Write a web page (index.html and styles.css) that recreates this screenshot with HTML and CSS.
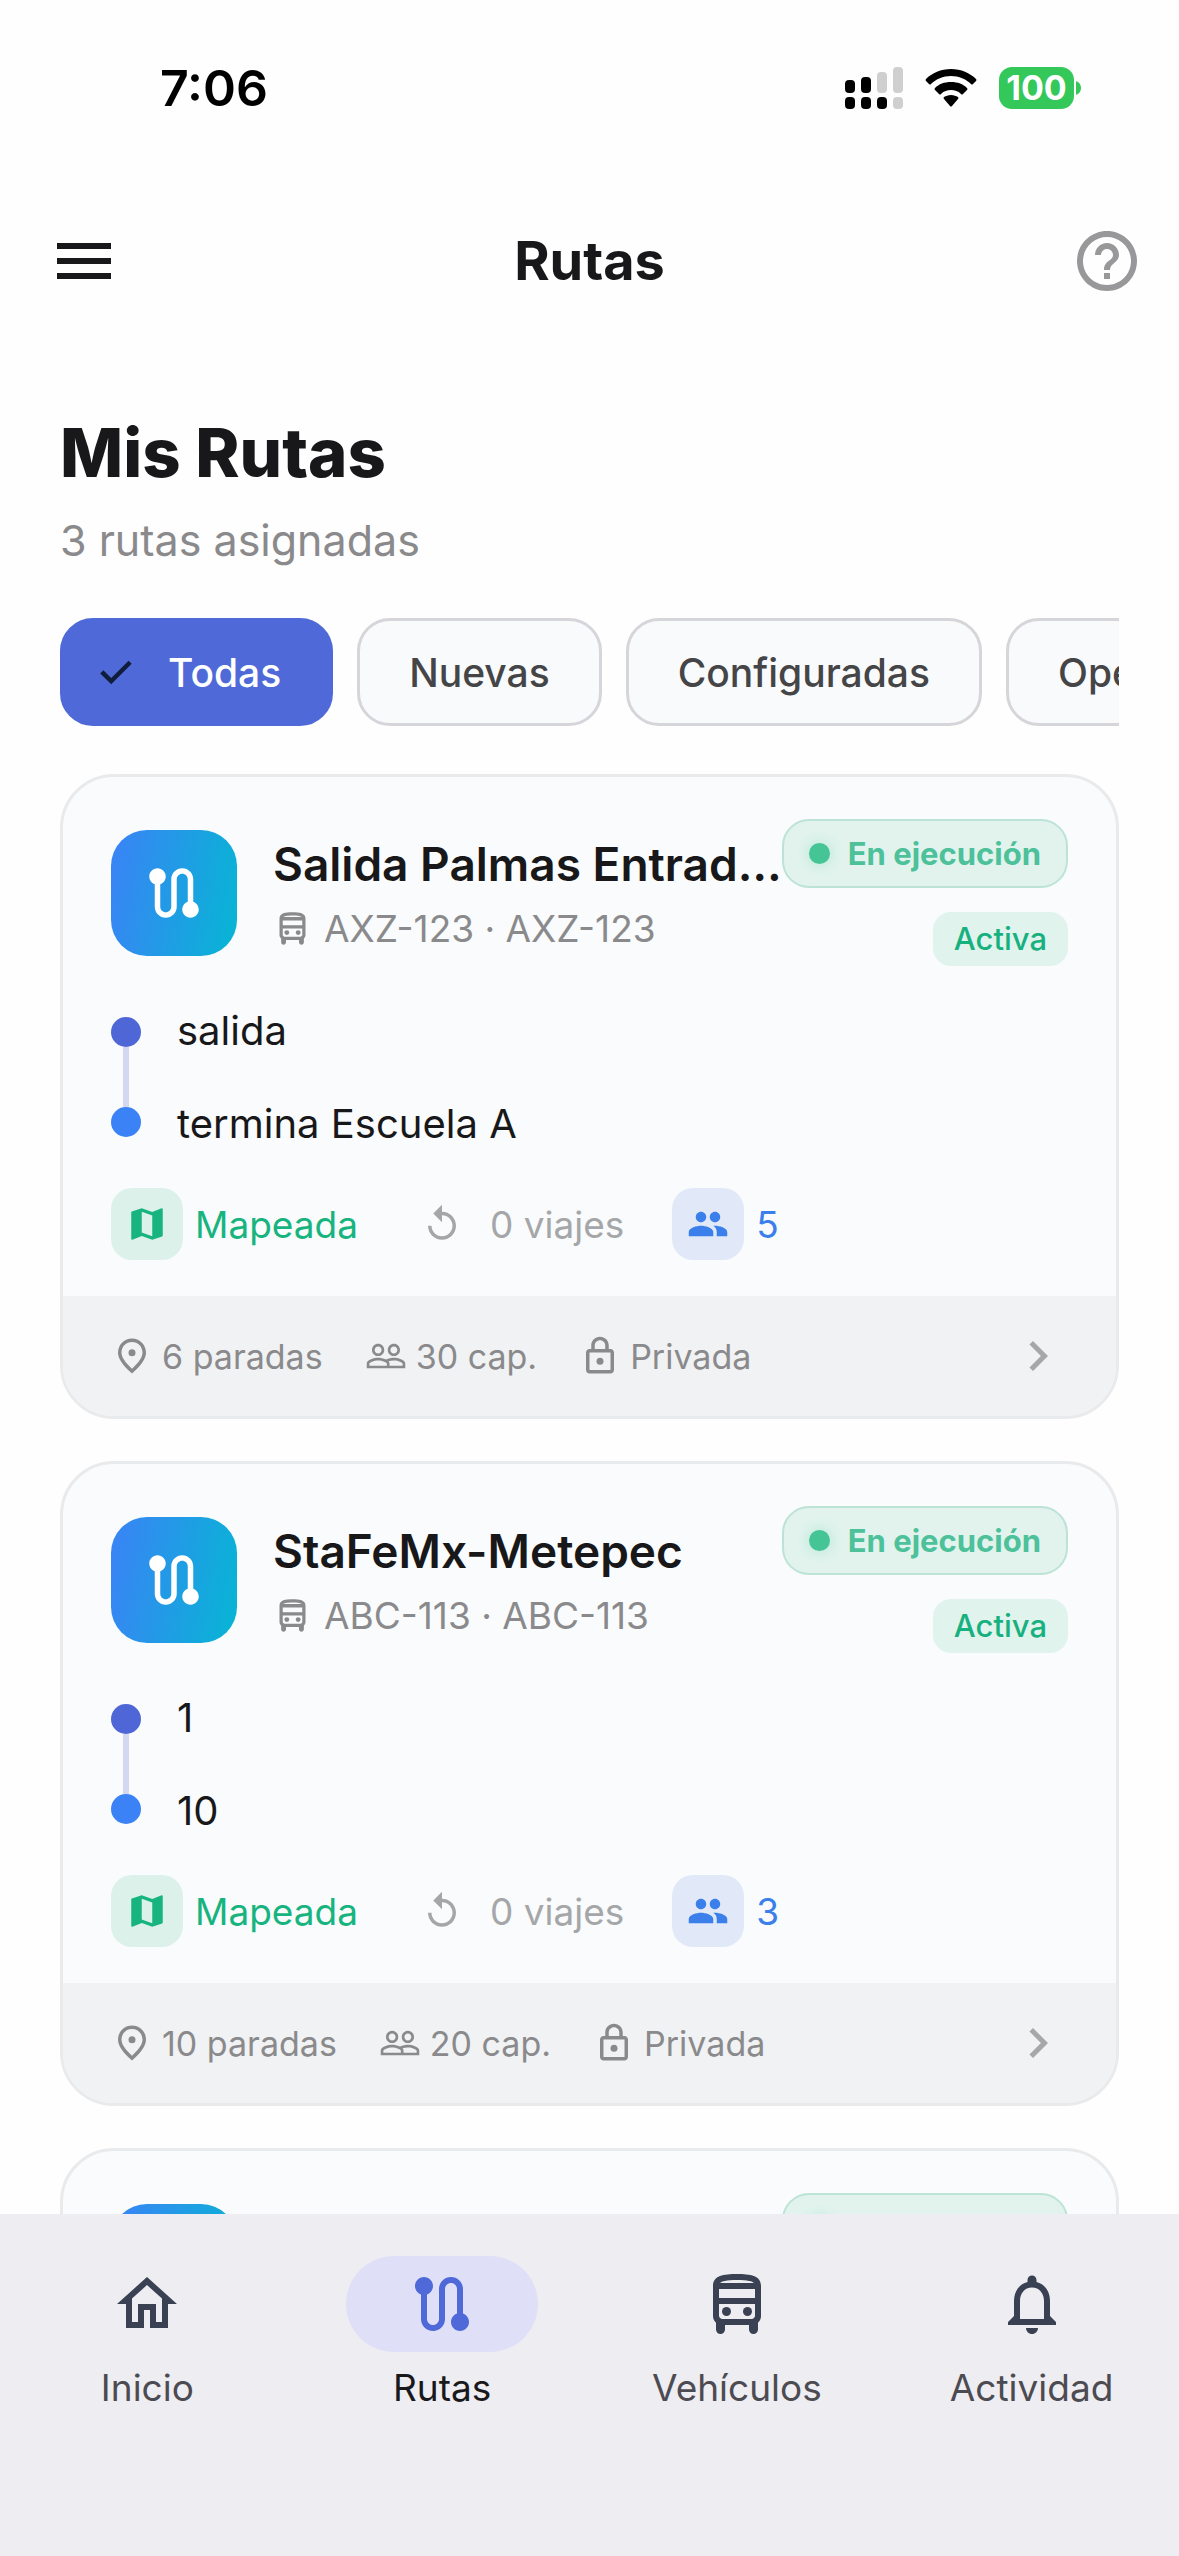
FILE: index.html
```html
<!DOCTYPE html>
<html lang="es">
<head>
<meta charset="utf-8">
<meta name="viewport" content="width=device-width, initial-scale=1">
<title>Rutas</title>
<link rel="stylesheet" href="styles.css">
</head>
<body>
<svg class="sprite" aria-hidden="true">
  <symbol id="i-menu" viewBox="0 0 24 24"><path d="M3 18h18v-2H3v2zm0-5h18v-2H3v2zm0-7v2h18V6H3z"/></symbol>
  <symbol id="i-help" viewBox="0 0 24 24"><path d="M11 18h2v-2h-2v2zm1-16C6.480 2 2 6.480 2 12s4.480 10 10 10 10-4.480 10-10S17.520 2 12 2zm0 18c-4.410 0-8-3.590-8-8s3.590-8 8-8 8 3.590 8 8-3.590 8-8 8zm0-14c-2.210 0-4 1.790-4 4h2c0-1.100.9-2 2-2s2 .9 2 2c0 2-3 1.750-3 5h2c0-2.250 3-2.500 3-5 0-2.210-1.790-4-4-4z"/></symbol>
  <symbol id="i-route" viewBox="0 0 24 24"><path d="M19 15.180V7c0-2.210-1.790-4-4-4s-4 1.790-4 4v10c0 1.100-.9 2-2 2s-2-.9-2-2V8.820C8.160 8.400 9 7.300 9 6c0-1.660-1.340-3-3-3S3 4.340 3 6c0 1.300.84 2.400 2 2.820V17c0 2.210 1.790 4 4 4s4-1.790 4-4V7c0-1.100.9-2 2-2s2 .9 2 2v8.180c-1.160.41-2 1.510-2 2.820 0 1.660 1.340 3 3 3s3-1.340 3-3c0-1.300-.84-2.400-2-2.820z"/></symbol>
  <symbol id="i-bus" viewBox="0 0 24 24"><path d="M12 2c-4.420 0-8 .5-8 4v10c0 .88.39 1.670 1 2.220V20.500c0 .83.67 1.500 1.500 1.500S8 21.330 8 20.500V19h8v1.500c0 .82.67 1.500 1.500 1.500s1.500-.67 1.500-1.500v-2.280c.61-.55 1-1.340 1-2.220V6c0-3.500-3.580-4-8-4zm5.660 2.990H6.340C6.890 4.460 8.310 4 12 4s5.110.46 5.660.99zM18 7v3H6V7h12zm-.34 9.660L17.080 17H6.920l-.58-.34C6.130 16.470 6 16.240 6 16v-4h12v4c0 .24-.13.47-.34.66z"/><circle cx="8.500" cy="14.500" r="1.500"/><circle cx="15.500" cy="14.500" r="1.500"/></symbol>
  <symbol id="i-map" viewBox="0 0 24 24"><path fill-rule="evenodd" d="M20.500 3l-.16.03L15 5.100 9 3 3.360 4.900c-.21.07-.36.25-.36.48V20.500c0 .28.22.5.5.5l.16-.03L9 18.900l6 2.100 5.640-1.900c.21-.07.36-.25.36-.48V3.500c0-.28-.22-.5-.5-.5zM15 19l-6-2.110V5l6 2.110V19z"/></symbol>
  <symbol id="i-replay" viewBox="0 0 24 24"><path d="M12 5V1L7 6l5 5V7c3.310 0 6 2.690 6 6s-2.690 6-6 6-6-2.690-6-6H4c0 4.420 3.580 8 8 8s8-3.580 8-8-3.580-8-8-8z"/></symbol>
  <symbol id="i-people" viewBox="0 0 24 24"><path d="M16 11c1.660 0 2.990-1.340 2.990-3S17.660 5 16 5s-3 1.340-3 3 1.340 3 3 3zm-8 0c1.660 0 2.990-1.340 2.990-3S9.660 5 8 5 5 6.340 5 8s1.340 3 3 3zm0 2c-2.330 0-7 1.170-7 3.500V19h14v-2.500c0-2.330-4.670-3.500-7-3.500zm8 0c-.29 0-.62.02-.97.05 1.160.84 1.970 1.970 1.970 3.450V19h6v-2.500c0-2.330-4.670-3.500-7-3.500z"/></symbol>
  <symbol id="i-group" viewBox="0 0 24 24"><path fill-rule="evenodd" d="M16.500 13c-1.200 0-3.070.34-4.500 1-1.430-.67-3.300-1-4.500-1C5.330 13 1 14.080 1 16.250V19h22v-2.750c0-2.170-4.330-3.250-6.500-3.250zm-4 4.500h-10v-1.250c0-.54 2.560-1.750 5-1.750s5 1.210 5 1.750v1.250zm9 0H14v-1.250c0-.46-.2-.86-.52-1.220.88-.3 1.960-.53 3.020-.53 2.440 0 5 1.210 5 1.750v1.250zM7.500 12c1.930 0 3.500-1.570 3.500-3.500S9.430 5 7.500 5 4 6.570 4 8.500 5.570 12 7.500 12zm0-5.500c1.100 0 2 .9 2 2s-.9 2-2 2-2-.9-2-2 .9-2 2-2zm9 5.500c1.930 0 3.500-1.570 3.500-3.500S18.430 5 16.500 5 13 6.570 13 8.500s1.570 3.500 3.500 3.500zm0-5.500c1.100 0 2 .9 2 2s-.9 2-2 2-2-.9-2-2 .9-2 2-2z"/></symbol>
  <symbol id="i-pin" viewBox="0 0 24 24"><path fill-rule="evenodd" d="M12 2c4.200 0 8 3.220 8 8.200 0 3.320-2.670 7.250-8 11.800-5.330-4.550-8-8.480-8-11.800C4 5.220 7.800 2 12 2zm6 8.200C18 6.570 15.350 4 12 4s-6 2.570-6 6.200c0 2.340 1.950 5.440 6 9.140 4.050-3.700 6-6.800 6-9.140z"/><circle cx="12" cy="10.200" r="2"/></symbol>
  <symbol id="i-lock" viewBox="0 0 24 24"><path fill-rule="evenodd" d="M18 8h-1V6c0-2.760-2.240-5-5-5S7 3.240 7 6v2H6c-1.100 0-2 .9-2 2v10c0 1.100.9 2 2 2h12c1.100 0 2-.9 2-2V10c0-1.100-.9-2-2-2zM9 6c0-1.660 1.340-3 3-3s3 1.340 3 3v2H9V6zm9 14H6V10h12v10z"/><circle cx="12" cy="15" r="2"/></symbol>
  <symbol id="i-chevron" viewBox="0 0 24 24"><path d="M10 6L8.590 7.410 13.170 12l-4.580 4.590L10 18l6-6z"/></symbol>
  <symbol id="i-check" viewBox="0 0 24 24"><path d="M8.700 19l-6.300-6.200 1.800-1.800 4.500 4.400 9.900-9.900 1.800 1.800z"/></symbol>
  <symbol id="i-home" viewBox="0 0 24 24"><path d="M12 5.690l5 4.500V18h-2v-6H9v6H7v-7.810l5-4.500M12 3L2 12h3v8h6v-6h2v6h6v-8h3L12 3z"/></symbol>
  <symbol id="i-bell" viewBox="0 0 24 24"><path fill-rule="evenodd" d="M12 22c1.100 0 2-.9 2-2h-4c0 1.100.9 2 2 2zm6-6v-5c0-3.070-1.630-5.640-4.500-6.320V4c0-.83-.67-1.500-1.500-1.500s-1.500.67-1.500 1.500v.68C7.640 5.360 6 7.920 6 11v5l-2 2v1h16v-1l-2-2zm-2 1H8v-6c0-2.480 1.510-4.500 4-4.500s4 2.020 4 4.500v6z"/></symbol>
</svg>

<div class="app">
  <div class="status-bar">
    <time>7:06</time>
    <div class="status-icons">
      <svg class="signal" viewBox="0 0 58 42" role="img" aria-label="Señal">
        <rect x="0" y="13" width="10" height="13" rx="4"/><rect x="16" y="10" width="10" height="16" rx="4"/>
        <rect class="off" x="32" y="5" width="10" height="21" rx="4"/><rect class="off" x="48" y="0" width="10" height="26" rx="4"/>
        <rect x="0" y="30" width="10" height="12" rx="4"/><rect x="16" y="30" width="10" height="12" rx="4"/>
        <rect x="32" y="30" width="10" height="12" rx="4"/><rect class="off" x="48" y="30" width="10" height="12" rx="4"/>
      </svg>
      <svg class="wifi" viewBox="0 0 52 38" role="img" aria-label="Wi-Fi">
        <path d="M26 0C36 0 45 4 51 10q1 1 0 2l-3 3q-1 1-2 0C41 10 34 7 26 7S11 10 6 15q-1 1-2 0l-3-3q-1-1 0-2C7 4 16 0 26 0z"/>
        <path d="M26 13c7 0 12 2 16 6q1 1 0 2l-4 4q-1 1-2 0c-3-3-6-4-10-4s-7 1-10 4q-1 1-2 0l-4-4q-1-1 0-2c4-4 9-6 16-6z"/>
        <path d="M26 26c3 0 5 1 7 2q1 1 0 2l-6 7q-1 1-2 0l-6-7q-1-1 0-2c2-1 4-2 7-2z"/>
      </svg>
      <div class="battery"><span class="battery-body">100</span><svg viewBox="0 0 5 14" aria-hidden="true"><path d="M0 0q5 2 5 7t-5 7z"/></svg></div>
    </div>
  </div>

  <header class="app-bar">
    <button class="icon-button" type="button" aria-label="Menú"><svg class="icon-lg"><use href="#i-menu"/></svg></button>
    <div class="app-title">Rutas</div>
    <button class="icon-button help" type="button" aria-label="Ayuda"><svg class="icon-lg"><use href="#i-help"/></svg></button>
  </header>

  <main class="content">
    <h1>Mis Rutas</h1>
    <p class="summary">3 rutas asignadas</p>

    <div class="chips">
      <button class="chip selected" type="button" aria-pressed="true"><svg class="chip-check"><use href="#i-check"/></svg>Todas</button>
      <button class="chip" type="button" aria-pressed="false">Nuevas</button>
      <button class="chip" type="button" aria-pressed="false">Configuradas</button>
      <button class="chip" type="button" aria-pressed="false">Operando</button>
    </div>

    <div class="cards">
      <article class="card">
        <div class="card-body">
          <div class="card-head">
            <div class="tile"><svg><use href="#i-route"/></svg></div>
            <div class="heading">
              <h2>Salida Palmas Entrada Escuela</h2>
              <p class="vehicle"><svg><use href="#i-bus"/></svg>AXZ-123 · AXZ-123</p>
            </div>
            <div class="badges">
              <span class="badge-run"><i class="pulse"></i>En ejecución</span>
              <span class="badge-active">Activa</span>
            </div>
          </div>
          <div class="stops">
            <div class="track"><i class="dot"></i><i class="line"></i><i class="dot end"></i></div>
            <ol><li>salida</li><li>termina Escuela A</li></ol>
          </div>
          <div class="stats">
            <span class="stat mapped"><span class="stat-icon"><svg class="icon-sm"><use href="#i-map"/></svg></span>Mapeada</span>
            <span class="stat trips"><span class="stat-icon"><svg class="icon-sm"><use href="#i-replay"/></svg></span>0 viajes</span>
            <span class="stat riders"><span class="stat-icon"><svg class="icon-sm"><use href="#i-people"/></svg></span>5</span>
          </div>
        </div>
        <footer class="card-foot">
          <span class="fact"><svg class="icon-sm"><use href="#i-pin"/></svg>6 paradas</span>
          <span class="fact"><svg class="icon-sm"><use href="#i-group"/></svg>30 cap.</span>
          <span class="fact"><svg class="icon-sm"><use href="#i-lock"/></svg>Privada</span>
          <svg class="chevron"><use href="#i-chevron"/></svg>
        </footer>
      </article>

      <article class="card">
        <div class="card-body">
          <div class="card-head">
            <div class="tile"><svg><use href="#i-route"/></svg></div>
            <div class="heading">
              <h2>StaFeMx-Metepec</h2>
              <p class="vehicle"><svg><use href="#i-bus"/></svg>ABC-113 · ABC-113</p>
            </div>
            <div class="badges">
              <span class="badge-run"><i class="pulse"></i>En ejecución</span>
              <span class="badge-active">Activa</span>
            </div>
          </div>
          <div class="stops">
            <div class="track"><i class="dot"></i><i class="line"></i><i class="dot end"></i></div>
            <ol><li>1</li><li>10</li></ol>
          </div>
          <div class="stats">
            <span class="stat mapped"><span class="stat-icon"><svg class="icon-sm"><use href="#i-map"/></svg></span>Mapeada</span>
            <span class="stat trips"><span class="stat-icon"><svg class="icon-sm"><use href="#i-replay"/></svg></span>0 viajes</span>
            <span class="stat riders"><span class="stat-icon"><svg class="icon-sm"><use href="#i-people"/></svg></span>3</span>
          </div>
        </div>
        <footer class="card-foot">
          <span class="fact"><svg class="icon-sm"><use href="#i-pin"/></svg>10 paradas</span>
          <span class="fact"><svg class="icon-sm"><use href="#i-group"/></svg>20 cap.</span>
          <span class="fact"><svg class="icon-sm"><use href="#i-lock"/></svg>Privada</span>
          <svg class="chevron"><use href="#i-chevron"/></svg>
        </footer>
      </article>

      <article class="card">
        <div class="card-body">
          <div class="card-head">
            <div class="tile"><svg><use href="#i-route"/></svg></div>
            <div class="heading"></div>
            <div class="badges">
              <span class="badge-run"><i class="pulse"></i>En ejecución</span>
              <span class="badge-active">Activa</span>
            </div>
          </div>
        </div>
      </article>
    </div>
  </main>

  <nav class="tabs" aria-label="Principal">
    <a class="tab" href="#inicio"><span class="tab-icon"><svg class="icon-lg"><use href="#i-home"/></svg></span>Inicio</a>
    <a class="tab current" href="#rutas" aria-current="page"><span class="tab-icon"><svg class="icon-lg"><use href="#i-route"/></svg></span>Rutas</a>
    <a class="tab" href="#vehiculos"><span class="tab-icon"><svg class="icon-lg"><use href="#i-bus"/></svg></span>Vehículos</a>
    <a class="tab" href="#actividad"><span class="tab-icon"><svg class="icon-lg"><use href="#i-bell"/></svg></span>Actividad</a>
  </nav>
</div>
</body>
</html>
```
FILE: styles.css
```css
* { box-sizing: border-box; }

body, h1, h2, p, ol { margin: 0; padding: 0; }

body {
  background: #fefefe;
  color: #18181a;
  font-family: Inter, "Liberation Sans", sans-serif;
}

button { font: inherit; color: inherit; border: 0; background: none; padding: 0; }
svg { display: block; fill: currentColor; flex: none; }
.sprite { display: none; }

.icon-lg { width: 72px; height: 72px; }
.icon-sm { width: 42px; height: 42px; }

.app { display: flex; flex-direction: column; height: 100vh; }

/* Status bar */
.status-bar {
  display: flex;
  align-items: center;
  justify-content: space-between;
  height: 176px;
  padding: 0 98px 0 160px;
  color: #000;
}
.status-bar time { font-size: 50px; font-weight: 600; }
.status-icons { display: flex; align-items: center; gap: 22px; }
.signal { width: 58px; height: 42px; }
.signal .off { fill: #cfcfcf; }
.wifi { width: 52px; height: 38px; }
.battery { display: flex; align-items: center; gap: 2px; color: #34c759; }
.battery-body {
  width: 75px;
  border-radius: 13px;
  background: #34c759;
  color: #fff;
  font-size: 34px;
  font-weight: 700;
  line-height: 42px;
  text-align: center;
}
.battery svg { width: 5px; height: 14px; }

/* App bar */
.app-bar {
  display: grid;
  grid-template-columns: 1fr auto 1fr;
  align-items: center;
  height: 169px;
  padding: 0 36px;
}
.icon-button { justify-self: start; margin-left: 12px; }
.app-title { font-size: 54px; font-weight: 700; line-height: 66px; }
.help { justify-self: end; color: #98989a; }

/* Content */
.content {
  flex: 1;
  min-height: 0;
  overflow: auto;
  scrollbar-width: none;
  padding: 66px 60px 0;
}
h1 { font-size: 67px; font-weight: 800; line-height: 84px; }
.summary { margin-top: 18px; color: #8a8a8c; font-size: 43px; line-height: 54px; }

.chips {
  display: flex;
  gap: 24px;
  margin-top: 51px;
  overflow: auto;
  scrollbar-width: none;
}
.chip {
  display: flex;
  flex: none;
  align-items: center;
  gap: 30px;
  height: 108px;
  padding: 0 49px;
  border: 3px solid #d6d6da;
  border-radius: 33px;
  background: #f9fafc;
  color: #454548;
  font-size: 39px;
  font-weight: 500;
}
.chip.selected { padding-left: 33px; border-color: #4f6ad8; background: #4f6ad8; color: #fff; }
.chip-check { width: 42px; height: 42px; color: #101d3c; }

.cards { display: flex; flex-direction: column; gap: 42px; margin-top: 48px; }
.card {
  border: 3px solid #e9eaec;
  border-radius: 54px;
  background: #f9fbfc;
  overflow: hidden;
}
.card-body { display: flex; flex-direction: column; gap: 39px; padding: 42px 48px 36px; }
.card-head { display: flex; align-items: center; }
.tile {
  display: grid;
  flex: none;
  place-items: center;
  width: 126px;
  height: 126px;
  border-radius: 36px;
  background: linear-gradient(100deg, #3b82f6, #06b6d4);
  color: #fff;
}
.tile svg { width: 66px; height: 66px; }
.heading { flex: 1; min-width: 0; margin-left: 36px; }
h2 {
  overflow: hidden;
  font-size: 46px;
  font-weight: 600;
  line-height: 60px;
  text-overflow: ellipsis;
  white-space: nowrap;
}
.vehicle {
  display: flex;
  align-items: center;
  gap: 12px;
  margin-top: 12px;
  color: #8a8a8c;
  font-size: 37px;
  line-height: 45px;
}
.vehicle svg { width: 39px; height: 39px; }

.badges { display: flex; flex: none; flex-direction: column; align-items: flex-end; gap: 24px; }
.badge-run {
  display: flex;
  align-items: center;
  gap: 18px;
  height: 69px;
  padding: 0 25px;
  border: 2px solid #bce3d6;
  border-radius: 27px;
  background: #e2f3ee;
  color: #4cc19a;
  font-size: 31px;
  font-weight: 700;
}
.pulse {
  width: 21px;
  height: 21px;
  border-radius: 50%;
  background: #45c496;
  box-shadow: 0 0 12px 3px #c3ebdd;
}
.badge-active {
  padding: 0 21px;
  border-radius: 18px;
  background: #e1f3ed;
  color: #17b180;
  font-size: 31px;
  font-weight: 500;
  line-height: 54px;
}

.stops { display: flex; align-items: center; gap: 36px; }
.track { display: flex; flex-direction: column; align-items: center; }
.dot { width: 30px; height: 30px; border-radius: 50%; background: #4f66d6; }
.dot.end { background: #3b82f6; }
.line { width: 6px; height: 60px; background: #d4d7f1; }
.stops ol {
  display: flex;
  flex-direction: column;
  gap: 42px;
  font-size: 40px;
  line-height: 51px;
  list-style: none;
}

.stats { display: flex; gap: 48px; }
.stat { display: flex; align-items: center; gap: 12px; font-size: 37px; }
.stat-icon { display: grid; place-items: center; width: 72px; height: 72px; border-radius: 21px; }
.mapped { color: #17b480; }
.mapped .stat-icon { background: #dcf1ea; }
.trips { color: #a5a6a8; }
.riders { color: #3b7fea; }
.riders .stat-icon { background: #e1e9f9; }

.card-foot {
  display: flex;
  align-items: center;
  gap: 42px;
  height: 120px;
  padding: 0 48px;
  background: #f1f2f4;
  color: #8a8a8c;
  font-size: 34px;
}
.fact { display: flex; align-items: center; gap: 9px; }
.chevron { width: 60px; height: 60px; margin-left: auto; color: #a6a7a9; }

/* Bottom navigation */
.tabs {
  display: grid;
  grid-template-columns: repeat(4, 1fr);
  height: 342px;
  padding-top: 42px;
  background: #eeedf2;
}
.tab {
  display: flex;
  flex-direction: column;
  align-items: center;
  gap: 12px;
  color: #4c4b52;
  font-size: 37px;
  line-height: 48px;
  text-decoration: none;
}
.tab-icon {
  display: grid;
  place-items: center;
  width: 192px;
  height: 96px;
  border-radius: 48px;
  color: #3a4153;
}
.current { color: #19191c; }
.current .tab-icon { background: #dfe0f8; color: #4f69d8; }
```
